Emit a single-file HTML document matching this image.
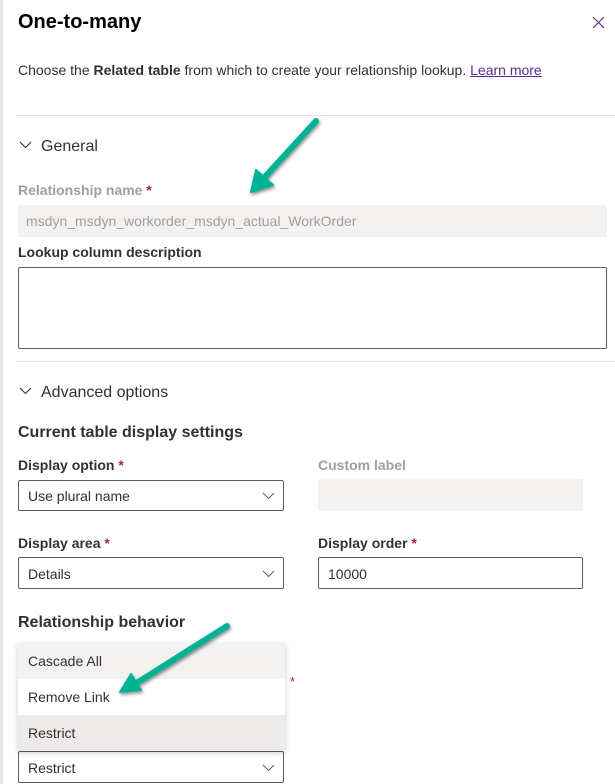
<!DOCTYPE html>
<html><head><meta charset="utf-8"><style>
*{box-sizing:border-box;margin:0;padding:0}
body{width:615px;height:784px;overflow:hidden;background:#fff;font-family:"Liberation Sans",sans-serif;color:#323130;position:relative;font-size:14px}
.a{position:absolute;white-space:nowrap}
.lbl{font-weight:bold;font-size:14px;color:#323130}
.req{color:#a4262c}
.box{position:absolute;border:1px solid #605e5c;border-radius:2px;background:#fff}
.gbox{position:absolute;background:#f3f2f1;border-radius:2px}
.chev{position:absolute;right:8px;top:8px}
.hr{position:absolute;left:16px;right:0;height:1px;background:#e1dfdd}
</style></head><body>
<div class="a" style="left:0;top:0;width:3px;height:784px;background:#e8e8e8"></div>
<div class="a" style="left:18px;top:11px;font-size:20px;font-weight:bold;color:#000">One-to-many</div>
<svg class="a" style="left:592px;top:16px" width="13" height="13" viewBox="0 0 13 13"><path d="M1 1L12 12M12 1L1 12" stroke="#6b2e8f" stroke-width="1.2" fill="none"/></svg>
<div class="a" style="left:18px;top:62px;font-size:14px;color:#323130">Choose the <b>Related table</b> from which to create your relationship lookup. <span style="color:#5c2d91;text-decoration:underline">Learn more</span></div>
<div class="hr" style="top:115px"></div>
<svg class="a" style="left:19px;top:141px" width="13" height="8" viewBox="0 0 13 8"><path d="M1 1L6.5 6.5L12 1" stroke="#323130" fill="none"/></svg>
<div class="a" style="left:41px;top:138px;font-size:16px">General</div>
<div class="a lbl" style="left:18px;top:182px;color:#a19f9d">Relationship name <span class="req">*</span></div>
<div class="gbox" style="left:18px;top:205px;width:589px;height:32px"></div>
<div class="a" style="left:26px;top:213px;color:#a19f9d">msdyn_msdyn_workorder_msdyn_actual_WorkOrder</div>
<div class="a lbl" style="left:18px;top:244px">Lookup column description</div>
<div class="box" style="left:18px;top:267px;width:589px;height:82px"></div>
<div class="hr" style="top:361px"></div>
<svg class="a" style="left:19px;top:387px" width="13" height="8" viewBox="0 0 13 8"><path d="M1 1L6.5 6.5L12 1" stroke="#323130" fill="none"/></svg>
<div class="a" style="left:41px;top:384px;font-size:16px">Advanced options</div>
<div class="a" style="left:18px;top:424px;font-size:16px;font-weight:bold">Current table display settings</div>
<div class="a lbl" style="left:18px;top:457px">Display option <span class="req">*</span></div>
<div class="a lbl" style="left:318px;top:457px;color:#a19f9d">Custom label</div>
<div class="box" style="left:18px;top:480px;width:266px;height:31px"><span class="a" style="left:9px;top:7px">Use plural name</span><svg class="chev" width="13" height="8" viewBox="0 0 13 8" style="top:11px"><path d="M1 1L6.5 6.5L12 1" stroke="#605e5c" fill="none"/></svg></div>
<div class="gbox" style="left:318px;top:479px;width:265px;height:32px"></div>
<div class="a lbl" style="left:18px;top:535px">Display area <span class="req">*</span></div>
<div class="a lbl" style="left:318px;top:535px">Display order <span class="req">*</span></div>
<div class="box" style="left:18px;top:557px;width:266px;height:32px"><span class="a" style="left:9px;top:8px">Details</span><svg class="chev" width="13" height="8" viewBox="0 0 13 8" style="top:12px"><path d="M1 1L6.5 6.5L12 1" stroke="#605e5c" fill="none"/></svg></div>
<div class="box" style="left:318px;top:557px;width:265px;height:32px"><span class="a" style="left:9px;top:8px">10000</span></div>
<div class="a" style="left:18px;top:614px;font-size:16px;font-weight:bold">Relationship behavior</div>
<div class="a" style="left:290px;top:674px;color:#a4262c;font-size:13px">*</div>
<div class="box" style="left:18px;top:751px;width:266px;height:32px"><span class="a" style="left:9px;top:8px">Restrict</span><svg class="chev" width="13" height="8" viewBox="0 0 13 8" style="top:12px"><path d="M1 1L6.5 6.5L12 1" stroke="#605e5c" fill="none"/></svg></div>
<div class="a" style="left:18px;top:643px;width:267px;height:108px;box-shadow:0 2px 6px rgba(0,0,0,.2)">
 <div style="height:36px;background:#f3f2f1;padding:10px 10px">Cascade All</div>
 <div style="height:36px;background:#fff;padding:10px 10px">Remove Link</div>
 <div style="height:36px;background:#edebe9;padding:10px 10px">Restrict</div>
</div>
<svg class="a" style="left:0;top:0" width="615" height="784" viewBox="0 0 615 784">
<defs><filter id="s"><feDropShadow dx="1" dy="2" stdDeviation="1.5" flood-opacity=".45"/></filter></defs>
<g filter="url(#s)" fill="#00b294" stroke="#00b294" stroke-linecap="round" stroke-linejoin="round">
<path d="M316 121L262 180" stroke-width="6" fill="none"/>
<path d="M251 192L256 170L273 185Z" stroke-width="2"/>
<path d="M227 626L135 684" stroke-width="6" fill="none"/>
<path d="M120 692L131 674L141 690Z" stroke-width="2"/>
</g></svg>
</body></html>
